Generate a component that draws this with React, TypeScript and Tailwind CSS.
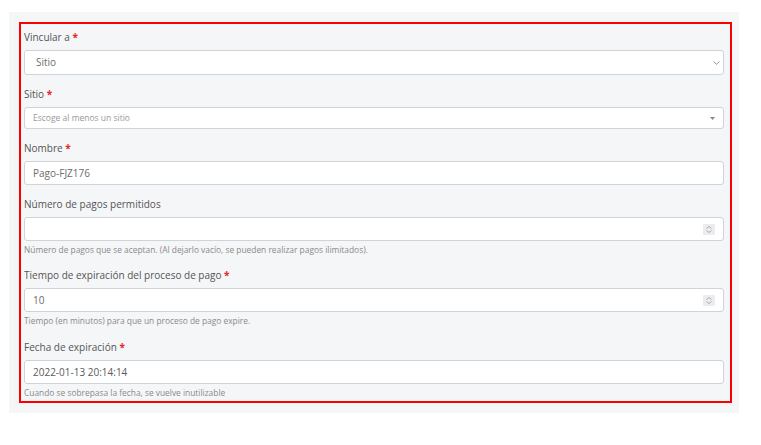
import React from 'react';

const font = { fontFamily: '"Open Sans", "Noto Sans", sans-serif' };

function Label({ text, required }: { text: string; required?: boolean }) {
  return (
    <div className="h-[20px] leading-[20px] text-[10px] text-[#545454] mb-[3px]">
      {text}
      {required && <span className="text-[#e3262b] font-bold"> *</span>}
    </div>
  );
}

function Help({ text }: { text: string }) {
  return <div className="mt-[3px] h-[12px] leading-[12px] text-[8.4px] text-[#8a8a8a]">{text}</div>;
}

function Spinner() {
  return (
    <div className="w-[12px] h-[11px] bg-[#ececef] rounded-[1px] flex flex-col items-center justify-center gap-[1px]">
      <svg width="6" height="3" viewBox="0 0 6 3">
        <path d="M0.5 2.5 L3 0.5 L5.5 2.5" fill="none" stroke="#9a9a9a" strokeWidth="0.8" />
      </svg>
      <svg width="6" height="3" viewBox="0 0 6 3">
        <path d="M0.5 0.5 L3 2.5 L5.5 0.5" fill="none" stroke="#9a9a9a" strokeWidth="0.8" />
      </svg>
    </div>
  );
}

export default function App() {
  return (
    <div className="min-h-screen bg-white pt-[12px] pl-[9px]" style={font}>
      <div className="w-[730px] h-[401px] bg-[#f5f6f8] p-[10px]">
        <div className="w-[713px] h-[381px] border-2 border-[#ff0000] pt-[3px] pl-[3px] pr-[6px]">
          {/* Vincular a */}
          <Label text="Vincular a" required />
          <div className="h-[25px] bg-white border border-[#ced4da] rounded-[3px] flex items-center justify-between pl-[11px] pr-[3px] text-[10px] text-[#6c6c6c]">
            <span>Sitio</span>
            <svg width="7" height="4" viewBox="0 0 7 4">
              <path d="M0.5 0.5 L3.5 3.3 L6.5 0.5" fill="none" stroke="#8a8a8a" strokeWidth="0.9" />
            </svg>
          </div>

          {/* Sitio */}
          <div className="mt-[9px]">
            <Label text="Sitio" required />
            <div className="h-[22px] bg-white border border-[#ced4da] rounded-[3px] flex items-center justify-between pl-[8px] pr-[8px] text-[8.5px] text-[#999]">
              <span>Escoge al menos un sitio</span>
              <svg width="5" height="3" viewBox="0 0 5 3">
                <path d="M0 0 L5 0 L2.5 3 Z" fill="#888" />
              </svg>
            </div>
          </div>

          {/* Nombre */}
          <div className="mt-[9px]">
            <Label text="Nombre" required />
            <div className="h-[24px] bg-white border border-[#ced4da] rounded-[3px] flex items-center pl-[8px] text-[10px] text-[#6c6c6c]">
              Pago-FJZ176
            </div>
          </div>

          {/* Numero de pagos */}
          <div className="mt-[9px]">
            <Label text="Número de pagos permitidos" />
            <div className="h-[24px] bg-white border border-[#ced4da] rounded-[3px] flex items-center justify-end pr-[8px]">
              <Spinner />
            </div>
            <Help text="Número de pagos que se aceptan. (Al dejarlo vacío, se pueden realizar pagos ilimitados)." />
          </div>

          {/* Tiempo */}
          <div className="mt-[9px]">
            <Label text="Tiempo de expiración del proceso de pago" required />
            <div className="h-[24px] bg-white border border-[#ced4da] rounded-[3px] flex items-center justify-between pl-[8px] pr-[8px] text-[10px] text-[#6c6c6c]">
              <span>10</span>
              <Spinner />
            </div>
            <Help text="Tiempo (en minutos) para que un proceso de pago expire." />
          </div>

          {/* Fecha */}
          <div className="mt-[10px]">
            <Label text="Fecha de expiración" required />
            <div className="h-[24px] bg-white border border-[#ced4da] rounded-[3px] flex items-center pl-[8px] text-[10px] text-[#5a5a5a]">
              2022-01-13 20:14:14
            </div>
            <Help text="Cuando se sobrepasa la fecha, se vuelve inutilizable" />
          </div>
        </div>
      </div>
    </div>
  );
}
